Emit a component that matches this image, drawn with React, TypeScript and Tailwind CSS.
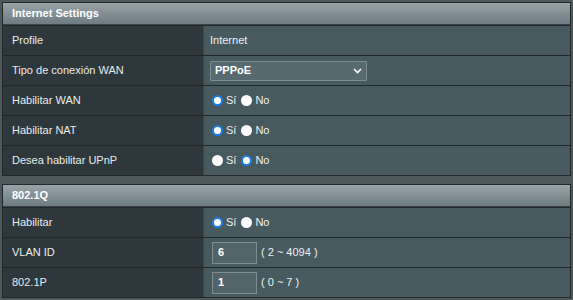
import React from "react";

const Radio = ({ checked }: { checked: boolean }) =>
  checked ? (
    <span className="inline-block w-[11px] h-[11px] rounded-full bg-white border-[2.5px] border-[#1a7fe0] box-border" />
  ) : (
    <span className="inline-block w-[11px] h-[11px] rounded-full bg-white" />
  );

const RadioPair = ({ yes }: { yes: boolean }) => (
  <div className="flex items-center ml-[2px]">
    <Radio checked={yes} />
    <span className="ml-[3px] mr-[5px]">Sí</span>
    <Radio checked={!yes} />
    <span className="ml-[3px]">No</span>
  </div>
);

const Row = ({ label, children }: { label: string; children: React.ReactNode }) => (
  <div className="grid grid-cols-[200px_1fr] h-[30px] border-t border-[#20282b]">
    <div className="bg-[#2e383c] flex items-center pl-[9px] text-[#e8ecec]">{label}</div>
    <div className="bg-[#475a60] flex items-center pl-[6px] text-[#eef1f1] border-l border-[#3a474b]">{children}</div>
  </div>
);

const Header = ({ title }: { title: string }) => (
  <div className="h-[22px] bg-gradient-to-b from-[#97a3a8] to-[#6d7c82] flex items-center pl-[9px] font-bold text-white border-b border-[#3a4448]">
    {title}
  </div>
);

const NumInput = ({ v }: { v: string }) => (
  <div className="w-[45px] h-[22px] bg-[#526469] border border-[#7d8d92] flex items-center pl-[5px] text-white font-bold">{v}</div>
);

export default function App() {
  return (
    <div
      className="w-[573px] h-[300px] bg-[#4d585b] pt-[2px] px-[2px] text-[11px] leading-none"
      style={{ fontFamily: '"Liberation Sans", Arial, sans-serif' }}
    >
      <div className="border border-[#22292c] w-[569px]">
        <Header title="Internet Settings" />
        <Row label="Profile">Internet</Row>
        <Row label="Tipo de conexión WAN">
          <div className="w-[157px] h-[20px] bg-[#576a70] border border-[#7c8c91] flex items-center justify-between px-[4px] font-bold text-white rounded-[1px]">
            <span>PPPoE</span>
            <svg width="9" height="6" viewBox="0 0 9 6"><path d="M1 1l3.5 3.5L8 1" stroke="#fff" strokeWidth="1.6" fill="none" /></svg>
          </div>
        </Row>
        <Row label="Habilitar WAN"><RadioPair yes /></Row>
        <Row label="Habilitar NAT"><RadioPair yes /></Row>
        <Row label="Desea habilitar UPnP"><RadioPair yes={false} /></Row>
      </div>
      <div className="border border-[#22292c] w-[569px] mt-[8px]">
        <Header title="802.1Q" />
        <Row label="Habilitar"><RadioPair yes /></Row>
        <Row label="VLAN ID">
          <div className="flex items-center gap-[4px] ml-[2px]"><NumInput v="6" /><span>( 2 ~ 4094 )</span></div>
        </Row>
        <Row label="802.1P">
          <div className="flex items-center gap-[4px] ml-[2px]"><NumInput v="1" /><span>( 0 ~ 7 )</span></div>
        </Row>
      </div>
    </div>
  );
}
